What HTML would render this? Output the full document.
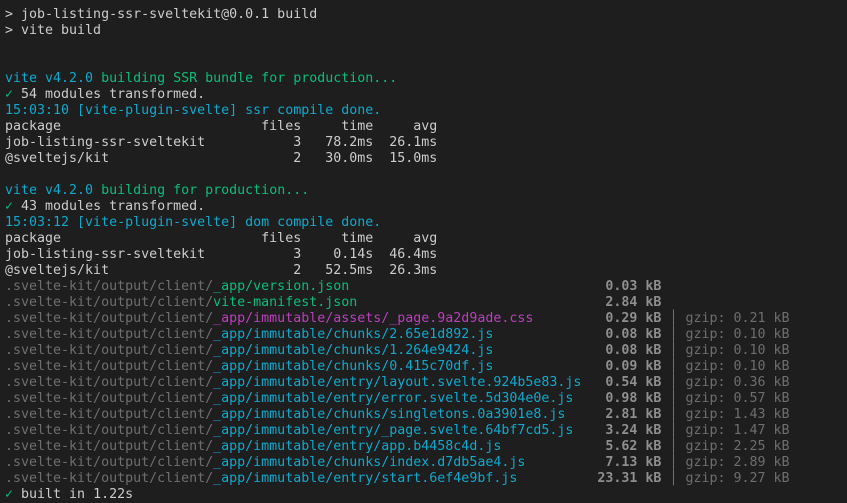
<!DOCTYPE html>
<html><head><meta charset="utf-8"><style>
html,body{margin:0;padding:0;background:#1e1e1e;width:847px;height:502px;overflow:hidden}
#t{position:absolute;left:5px;top:7px;font-family:"DejaVu Sans Mono","Liberation Mono",monospace;font-size:13.3px;line-height:16px;color:#cccccc}
.l{position:relative;height:16px;white-space:pre}
.c{color:#11a8cd}.g{color:#0dbc79}.m{color:#bc3fbc}.d{color:#6e6e6e}
.s{position:absolute;left:74ch;width:8ch;text-align:right;font-weight:bold;color:#8f8f8f}
.z{position:absolute;left:82ch;color:#6e6e6e}
</style></head><body><div id="t"><div class="l">&gt; job-listing-ssr-sveltekit@0.0.1 build</div><div class="l">&gt; vite build</div><div class="l"></div><div class="l"></div><div class="l"><span class="c">vite v4.2.0 </span><span class="g">building SSR bundle for production...</span></div><div class="l"><span class="g">✓</span> 54 modules transformed.</div><div class="l c">15:03:10 [vite-plugin-svelte] ssr compile done.</div><div class="l">package                         files     time     avg</div><div class="l">job-listing-ssr-sveltekit           3   78.2ms  26.1ms</div><div class="l">@sveltejs/kit                       2   30.0ms  15.0ms</div><div class="l"></div><div class="l"><span class="c">vite v4.2.0 </span><span class="g">building for production...</span></div><div class="l"><span class="g">✓</span> 43 modules transformed.</div><div class="l c">15:03:12 [vite-plugin-svelte] dom compile done.</div><div class="l">package                         files     time     avg</div><div class="l">job-listing-ssr-sveltekit           3    0.14s  46.4ms</div><div class="l">@sveltejs/kit                       2   52.5ms  26.3ms</div><div class="l"><span class="d">.svelte-kit/output/client/</span><span class="g">_app/version.json</span><span class="s">0.03 kB</span></div><div class="l"><span class="d">.svelte-kit/output/client/</span><span class="g">vite-manifest.json</span><span class="s">2.84 kB</span></div><div class="l"><span class="d">.svelte-kit/output/client/</span><span class="m">_app/immutable/assets/_page.9a2d9ade.css</span><span class="s">0.29 kB</span><span class="z"> │ gzip: 0.21 kB</span></div><div class="l"><span class="d">.svelte-kit/output/client/</span><span class="c">_app/immutable/chunks/2.65e1d892.js</span><span class="s">0.08 kB</span><span class="z"> │ gzip: 0.10 kB</span></div><div class="l"><span class="d">.svelte-kit/output/client/</span><span class="c">_app/immutable/chunks/1.264e9424.js</span><span class="s">0.08 kB</span><span class="z"> │ gzip: 0.10 kB</span></div><div class="l"><span class="d">.svelte-kit/output/client/</span><span class="c">_app/immutable/chunks/0.415c70df.js</span><span class="s">0.09 kB</span><span class="z"> │ gzip: 0.10 kB</span></div><div class="l"><span class="d">.svelte-kit/output/client/</span><span class="c">_app/immutable/entry/layout.svelte.924b5e83.js</span><span class="s">0.54 kB</span><span class="z"> │ gzip: 0.36 kB</span></div><div class="l"><span class="d">.svelte-kit/output/client/</span><span class="c">_app/immutable/entry/error.svelte.5d304e0e.js</span><span class="s">0.98 kB</span><span class="z"> │ gzip: 0.57 kB</span></div><div class="l"><span class="d">.svelte-kit/output/client/</span><span class="c">_app/immutable/chunks/singletons.0a3901e8.js</span><span class="s">2.81 kB</span><span class="z"> │ gzip: 1.43 kB</span></div><div class="l"><span class="d">.svelte-kit/output/client/</span><span class="c">_app/immutable/entry/_page.svelte.64bf7cd5.js</span><span class="s">3.24 kB</span><span class="z"> │ gzip: 1.47 kB</span></div><div class="l"><span class="d">.svelte-kit/output/client/</span><span class="c">_app/immutable/entry/app.b4458c4d.js</span><span class="s">5.62 kB</span><span class="z"> │ gzip: 2.25 kB</span></div><div class="l"><span class="d">.svelte-kit/output/client/</span><span class="c">_app/immutable/chunks/index.d7db5ae4.js</span><span class="s">7.13 kB</span><span class="z"> │ gzip: 2.89 kB</span></div><div class="l"><span class="d">.svelte-kit/output/client/</span><span class="c">_app/immutable/entry/start.6ef4e9bf.js</span><span class="s">23.31 kB</span><span class="z"> │ gzip: 9.27 kB</span></div><div class="l"><span class="g">✓</span> built in 1.22s</div></div></body></html>
